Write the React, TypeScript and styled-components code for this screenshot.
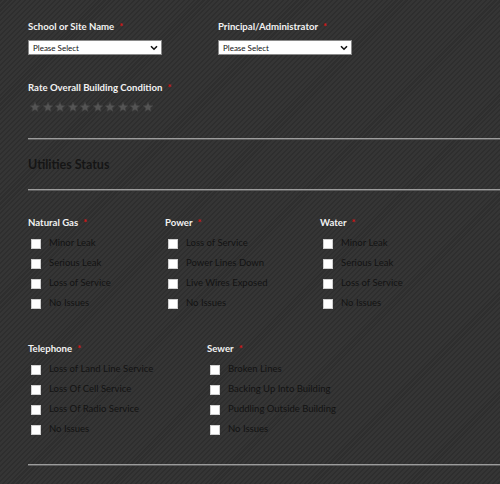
import styled, { createGlobalStyle } from "styled-components";

const GlobalStyle = createGlobalStyle`
  html, body {
    margin: 0;
    padding: 0;
  }
  body {
    background-color: #313131;
    background-image: repeating-linear-gradient(
      135deg,
      #2e2e2e 0px,
      #2e2e2e 1.5px,
      #353535 1.5px,
      #353535 3.5px
    );
    font-family: Lato, "DejaVu Sans", sans-serif;
    overflow: hidden;
    height: 484px;
  }
`;

const Form = styled.div`
  padding: 20px 0 0 28px;
`;

const FieldRow = styled.div<{ $gap: number }>`
  display: flex;
  margin-bottom: ${(p) => p.$gap}px;
`;

const Field = styled.div<{ $width?: number }>`
  width: ${(p) => (p.$width ? `${p.$width}px` : "auto")};
  display: flex;
  flex-direction: column;
`;

const Label = styled.div`
  color: #f2f2f2;
  font-size: 9.6px;
  font-weight: 700;
  line-height: 14px;
  height: 14px;
`;

const Required = styled.span`
  color: #d41616;
  margin-left: 5px;
`;

const SelectBox = styled.div`
  margin-top: 6px;
  width: 134px;
  height: 15px;
  box-sizing: border-box;
  background: #fff;
  border: 1px solid #8a8a8a;
  display: flex;
  align-items: center;
  justify-content: space-between;
  padding: 0 3px 0 4px;
  font-size: 8px;
  color: #111;
`;

const Stars = styled.div`
  display: flex;
  gap: 0.5px;
  margin-top: 6px;
  margin-left: 1px;
`;

const Rule = styled.div`
  height: 1px;
  background: #9c9c9c;
  border-bottom: 1px solid #5e5e5e;
`;

const Heading = styled.div`
  color: #151515;
  font-size: 12.5px;
  font-weight: 700;
  line-height: 16px;
  padding: 17px 0 16px;
`;

const Spacer = styled.div`
  height: 25px;
`;

const Group = styled.div<{ $width: number }>`
  width: ${(p) => p.$width}px;
`;

const Options = styled.div`
  display: flex;
  flex-direction: column;
  margin-top: 7px;
`;

const Option = styled.label`
  display: flex;
  align-items: flex-start;
  height: 20px;
  font-size: 9.5px;
  color: #131313;
  line-height: 12px;
`;

const Box = styled.span`
  width: 10px;
  height: 10px;
  box-sizing: border-box;
  background: #fff;
  border: 1px solid #cfcfcf;
  margin: 2px 8px 0 3px;
  flex-shrink: 0;
`;

const GroupRow = styled.div<{ $gap: number }>`
  display: flex;
  margin-bottom: ${(p) => p.$gap}px;
`;

const Chevron = () => (
  <svg width="8" height="6" viewBox="0 0 8 6">
    <path d="M1 1.2 L4 4.2 L7 1.2" stroke="#111" strokeWidth="1.6" fill="none" />
  </svg>
);

const Star = () => (
  <svg width="12" height="12" viewBox="0 0 24 24">
    <path
      d="M12 2 L14.9 8.6 L22 9.3 L16.6 14 L18.2 21 L12 17.3 L5.8 21 L7.4 14 L2 9.3 L9.1 8.6 Z"
      fill="#545454"
      stroke="#3e3e3e"
      strokeWidth="1.2"
    />
  </svg>
);

type GroupData = { title: string; width: number; options: string[] };

const utilityRows: { gap: number; groups: GroupData[] }[] = [
  {
    gap: 25,
    groups: [
      { title: "Natural Gas", width: 137, options: ["Minor Leak", "Serious Leak", "Loss of Service", "No Issues"] },
      { title: "Power", width: 155, options: ["Loss of Service", "Power Lines Down", "Live Wires Exposed", "No Issues"] },
      { title: "Water", width: 150, options: ["Minor Leak", "Serious Leak", "Loss of Service", "No Issues"] },
    ],
  },
  {
    gap: 21,
    groups: [
      {
        title: "Telephone",
        width: 179,
        options: ["Loss of Land Line Service", "Loss Of Cell Service", "Loss Of Radio Service", "No Issues"],
      },
      {
        title: "Sewer",
        width: 200,
        options: ["Broken Lines", "Backing Up Into Building", "Puddling Outside Building", "No Issues"],
      },
    ],
  },
];

const App = () => {
  return (
    <>
      <GlobalStyle />
      <Form>
        <FieldRow $gap={26}>
          <Field $width={190}>
            <Label>
              School or Site Name<Required>*</Required>
            </Label>
            <SelectBox>
              Please Select <Chevron />
            </SelectBox>
          </Field>
          <Field $width={190}>
            <Label>
              Principal/Administrator<Required>*</Required>
            </Label>
            <SelectBox>
              Please Select <Chevron />
            </SelectBox>
          </Field>
        </FieldRow>
        <FieldRow $gap={25}>
          <Field>
            <Label>
              Rate Overall Building Condition<Required>*</Required>
            </Label>
            <Stars>
              {Array.from({ length: 10 }).map((_, i) => (
                <Star key={i} />
              ))}
            </Stars>
          </Field>
        </FieldRow>
        <Rule />
        <Heading>Utilities Status</Heading>
        <Rule />
        <Spacer />
        {utilityRows.map((row, ri) => (
          <GroupRow key={ri} $gap={row.gap}>
            {row.groups.map((g) => (
              <Group key={g.title} $width={g.width}>
                <Label>
                  {g.title}
                  <Required>*</Required>
                </Label>
                <Options>
                  {g.options.map((o) => (
                    <Option key={o}>
                      <Box />
                      {o}
                    </Option>
                  ))}
                </Options>
              </Group>
            ))}
          </GroupRow>
        ))}
        <Rule />
      </Form>
    </>
  );
};

export default App;
